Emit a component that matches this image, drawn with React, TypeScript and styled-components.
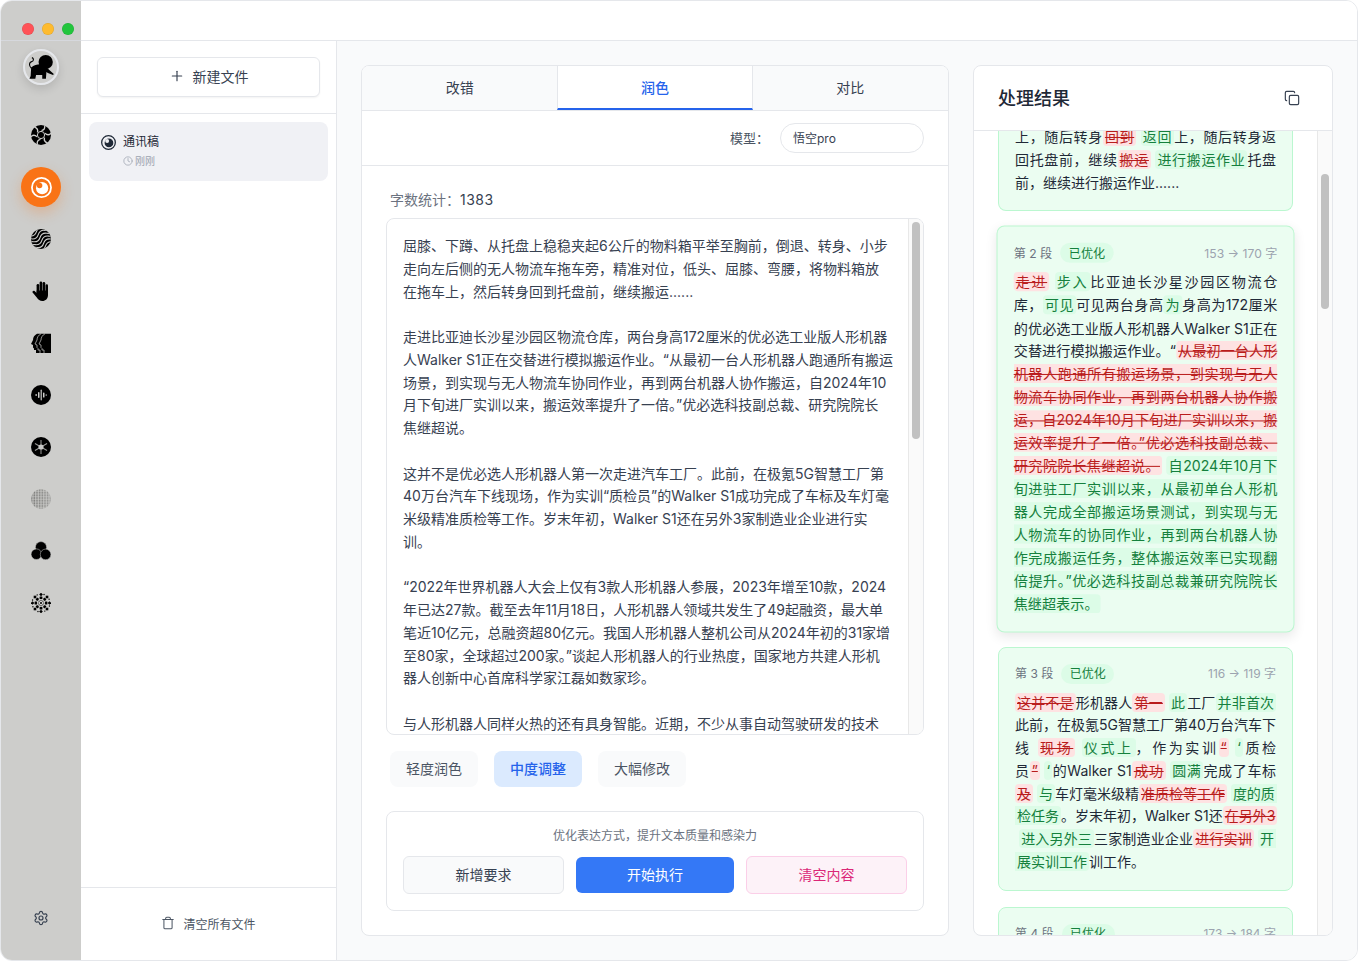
import React from "react";
import styled, { createGlobalStyle } from "styled-components";
import { Plus, Copy, Trash, Settings, Clock } from "lucide-react";

const GlobalStyle = createGlobalStyle`
  * {
    box-sizing: border-box;
  }
  html, body {
    margin: 0;
    padding: 0;
    background: #ffffff;
  }
  body {
    font-family: Inter, "Noto Sans CJK SC", sans-serif;
    font-size: 14px;
    color: #1f2937;
  }
`;

const Window = styled.div`
  width: 1358px;
  height: 961px;
  display: flex;
  border: 1px solid #e5e7eb;
  border-radius: 12px;
  overflow: hidden;
  background: #ffffff;
`;

const Rail = styled.aside`
  width: 80px;
  flex: none;
  display: flex;
  flex-direction: column;
  align-items: center;
  background: #cdcdcb;
`;

const Lights = styled.div`
  width: 100%;
  height: 40px;
  flex: none;
  display: flex;
  align-items: flex-end;
  gap: 8px;
  padding: 0 0 5px 21px;
  border-bottom: 1px solid rgba(222, 226, 236, 0.55);
`;

const Light = styled.span<{ $color: string }>`
  width: 12px;
  height: 12px;
  border-radius: 50%;
  background: ${(p) => p.$color};
  box-shadow: inset 0 0 0 0.5px rgba(0, 0, 0, 0.12);
`;

const Logo = styled.div`
  width: 36px;
  height: 36px;
  margin-top: 8px;
  flex: none;
  display: flex;
  align-items: center;
  justify-content: center;
  border: 2px solid #e5e7eb;
  border-radius: 50%;
  box-shadow: 0 4px 10px rgba(0, 0, 0, 0.12);
`;

const RailNav = styled.nav`
  margin-top: 30px;
  display: flex;
  flex-direction: column;
  gap: 12px;
`;

const RailItem = styled.div<{ $active?: boolean }>`
  width: 40px;
  height: 40px;
  display: flex;
  align-items: center;
  justify-content: center;
  border-radius: 50%;
  background: ${(p) => (p.$active ? "#f97316" : "transparent")};
  box-shadow: ${(p) => (p.$active ? "0 6px 14px rgba(249, 115, 22, 0.28)" : "none")};
`;

const RailFooter = styled.div`
  margin-top: auto;
  padding-bottom: 34px;
  color: #374151;
  display: flex;
`;

const Column = styled.div`
  flex: 1;
  min-width: 0;
  display: flex;
  flex-direction: column;
`;

const TopBar = styled.header`
  height: 40px;
  flex: none;
  background: #ffffff;
  border-bottom: 1px solid #e5e7eb;
`;

const Body = styled.div`
  flex: 1;
  min-height: 0;
  display: flex;
`;

const Sidebar = styled.aside`
  width: 256px;
  flex: none;
  display: flex;
  flex-direction: column;
  background: #ffffff;
  border-right: 1px solid #e5e7eb;
`;

const SidebarTop = styled.div`
  padding: 16px;
  border-bottom: 1px solid #e5e7eb;
`;

const NewFileButton = styled.button`
  width: 100%;
  height: 40px;
  display: flex;
  align-items: center;
  justify-content: center;
  gap: 8px;
  padding: 0 0 2px;
  font: inherit;
  font-size: 14px;
  color: #374151;
  background: #ffffff;
  border: 1px solid #e5e7eb;
  border-radius: 6px;
  box-shadow: 0 1px 2px rgba(0, 0, 0, 0.05);
`;

const FileList = styled.div`
  flex: 1;
  padding: 8px;
`;

const FileItem = styled.div`
  height: 59px;
  display: flex;
  gap: 7px;
  padding: 11px 12px;
  background: #f0f1f5;
  border-radius: 8px;
`;

const FileIcon = styled.div`
  margin-top: 2px;
  flex: none;
  display: flex;
`;

const FileInfo = styled.div`
  display: flex;
  flex-direction: column;
  gap: 3px;
`;

const FileName = styled.div`
  font-size: 12px;
  line-height: 18px;
  color: #1f2937;
`;

const FileMeta = styled.div`
  display: flex;
  align-items: center;
  gap: 2px;
  font-size: 10px;
  line-height: 14px;
  color: #9ca3af;
`;

const SidebarFooter = styled.div`
  height: 73px;
  flex: none;
  display: flex;
  align-items: center;
  justify-content: center;
  gap: 8px;
  padding-bottom: 2px;
  font-size: 12px;
  color: #4b5563;
  border-top: 1px solid #e5e7eb;
`;

const Main = styled.main`
  flex: 1;
  min-width: 0;
  display: flex;
  gap: 24px;
  padding: 24px;
  background: #f9fafb;
`;

const EditorCard = styled.section`
  flex: 1;
  min-width: 0;
  display: flex;
  flex-direction: column;
  background: #ffffff;
  border: 1px solid #e5e7eb;
  border-radius: 8px;
  overflow: hidden;
`;

const Tabs = styled.div`
  height: 45px;
  flex: none;
  display: flex;
  background: #f9fafb;
  border-bottom: 1px solid #e5e7eb;
`;

const Tab = styled.div<{ $active?: boolean }>`
  flex: 1;
  height: 44px;
  display: flex;
  align-items: center;
  justify-content: center;
  font-size: 14px;
  font-weight: ${(p) => (p.$active ? 500 : 400)};
  color: ${(p) => (p.$active ? "#2563eb" : "#374151")};
  background: ${(p) => (p.$active ? "#ffffff" : "transparent")};
  border-bottom: 2px solid ${(p) => (p.$active ? "#2563eb" : "transparent")};
  border-left: 1px solid ${(p) => (p.$active ? "#e5e7eb" : "transparent")};
  border-right: 1px solid ${(p) => (p.$active ? "#e5e7eb" : "transparent")};
`;

const ModelRow = styled.div`
  height: 55px;
  flex: none;
  display: flex;
  align-items: center;
  justify-content: flex-end;
  gap: 11px;
  padding: 0 24px;
  border-bottom: 1px solid #e5e7eb;
`;

const ModelLabel = styled.span`
  font-size: 13px;
  color: #4b5563;
  margin-bottom: 2px;
`;

const ModelSelect = styled.div`
  width: 144px;
  height: 30px;
  display: flex;
  align-items: center;
  padding: 0 12px 2px;
  font-size: 12px;
  color: #374151;
  border: 1px solid #e5e7eb;
  border-radius: 15px;
`;

const EditorBody = styled.div`
  flex: 1;
  min-height: 0;
  display: flex;
  flex-direction: column;
  padding: 24px;
`;

const WordCount = styled.div`
  flex: none;
  padding-left: 4px;
  margin-bottom: 8px;
  font-size: 14px;
  line-height: 20px;
  color: #6b7280;
`;

const WordNumber = styled.span`
  color: #374151;
  letter-spacing: 0.5px;
`;

const TextBox = styled.div`
  flex: 1;
  min-height: 0;
  display: flex;
  border: 1px solid #e5e7eb;
  border-radius: 8px;
  overflow: hidden;
`;

const SourceText = styled.div`
  flex: 1;
  min-width: 0;
  padding: 16px;
  font-size: 14px;
  line-height: 22.75px;
  color: #374151;
  white-space: pre;
  overflow: hidden;
`;

const Track = styled.div`
  width: 15px;
  flex: none;
  padding-left: 3px;
  background: #fafafa;
  border-left: 1px solid #e8e8e8;
`;

const Thumb = styled.div<{ $top: number; $height: number }>`
  width: 8px;
  height: ${(p) => p.$height}px;
  margin-top: ${(p) => p.$top}px;
  background: #c1c1c1;
  border-radius: 4px;
`;

const Chips = styled.div`
  flex: none;
  display: flex;
  gap: 16px;
  padding-left: 4px;
  margin: 16px 0 24px;
`;

const Chip = styled.div<{ $active?: boolean }>`
  width: 88px;
  height: 36px;
  display: flex;
  align-items: center;
  justify-content: center;
  padding-bottom: 2px;
  font-size: 14px;
  font-weight: ${(p) => (p.$active ? 500 : 400)};
  color: ${(p) => (p.$active ? "#2563eb" : "#4b5563")};
  background: ${(p) => (p.$active ? "#dbeafe" : "#f9fafb")};
  border-radius: 8px;
`;

const ActionBox = styled.div`
  height: 100px;
  flex: none;
  padding: 16px;
  border: 1px solid #e5e7eb;
  border-radius: 8px;
`;

const ActionHint = styled.div`
  font-size: 12px;
  line-height: 16px;
  text-align: center;
  color: #6b7280;
  margin-bottom: 12px;
`;

const ActionRow = styled.div`
  display: grid;
  grid-template-columns: 161px 158px 161px;
  gap: 12px;
  align-items: center;
`;

const tones = {
  plain: { bg: "#f9fafb", fg: "#374151", border: "1px solid #e5e7eb", height: 38 },
  primary: { bg: "#3478f6", fg: "#ffffff", border: "none", height: 36 },
  danger: { bg: "#fdf2f8", fg: "#db2777", border: "1px solid #fbcfe8", height: 38 },
};

const ActionButton = styled.button<{ $tone: keyof typeof tones }>`
  height: ${(p) => tones[p.$tone].height}px;
  padding: 0 0 2px;
  font: inherit;
  font-size: 14px;
  color: ${(p) => tones[p.$tone].fg};
  background: ${(p) => tones[p.$tone].bg};
  border: ${(p) => tones[p.$tone].border};
  border-radius: 6px;
`;

const ResultPanel = styled.section`
  width: 360px;
  flex: none;
  display: flex;
  flex-direction: column;
  background: #ffffff;
  border: 1px solid #e5e7eb;
  border-radius: 8px;
  overflow: hidden;
`;

const ResultHeader = styled.div`
  height: 65px;
  flex: none;
  display: flex;
  align-items: center;
  justify-content: space-between;
  padding: 0 32px 0 24px;
  border-bottom: 1px solid #e5e7eb;
`;

const ResultTitle = styled.h2`
  margin: 0 0 2px;
  font-size: 18px;
  font-weight: 500;
  color: #1f2937;
`;

const CopyButton = styled.div`
  display: flex;
  color: #374151;
`;

const ResultBody = styled.div`
  flex: 1;
  min-height: 0;
  display: flex;
`;

const ResultList = styled.div`
  flex: 1;
  min-width: 0;
  display: flex;
  flex-direction: column;
  gap: 16px;
  padding: 0 24px;
  overflow: hidden;
`;

const ResultCard = styled.article<{ $cut?: boolean; $raised?: boolean }>`
  flex: none;
  padding: ${(p) => (p.$cut ? "0 16px 16px" : "16px")};
  background: #ebfdf1;
  border: 1px solid #bbf7d0;
  border-top-width: ${(p) => (p.$cut ? 0 : 1)}px;
  border-radius: ${(p) => (p.$cut ? "0 0 8px 8px" : "8px")};
  transform: ${(p) => (p.$raised ? "translateY(0.5px) scale(1.01)" : "none")};
  box-shadow: ${(p) => (p.$raised ? "0 4px 12px rgba(0, 0, 0, 0.09)" : "none")};
`;

const CardHead = styled.div`
  display: flex;
  align-items: center;
  height: 20px;
  margin-bottom: 8px;
  font-size: 12px;
`;

const SegmentNo = styled.span`
  color: #6b7280;
  margin: 0 8px 2px 0;
`;

const Badge = styled.span`
  height: 20px;
  padding: 0 8.5px 2px;
  display: flex;
  align-items: center;
  color: #15803d;
  background: #dcfce7;
  border-radius: 10px;
`;

const CharCount = styled.span`
  margin: 0 0 2px auto;
  color: #9ca3af;
`;

const Diff = styled.p<{ $shift?: number }>`
  margin: ${(p) => p.$shift ?? 0}px 0 0;
  font-size: 14px;
  line-height: 22.75px;
  text-align: justify;
  color: #1f2937;
`;

const DiffLine = styled.span<{ $last?: boolean }>`
  display: block;
  white-space: nowrap;
  text-align-last: ${(p) => (p.$last ? "left" : "justify")};
`;

const radius = { start: "0 4px 4px 0", end: "4px 0 0 4px" };

const Del = styled.del`
  padding: 1px 2px;
  color: #b91c1c;
  background: #fee2e2;
  border-radius: 4px;
`;

const Ins = styled.ins<{ $split?: keyof typeof radius }>`
  padding: 1px 2px;
  color: #15803d;
  background: #dcfce7;
  border-radius: ${(p) => (p.$split ? radius[p.$split] : "4px")};
  text-decoration: none;
`;

const IconBall = () => (
  <svg width="20" height="20" viewBox="0 0 20 20">
    <circle cx="10" cy="10" r="10" fill="#000" />
    {[0, 60, 120, 180, 240, 300].map((a) => (
      <path key={a} d="M10.5 5.6 Q14.6 4.6 13.6 0.4" stroke="#cdcdcb" strokeWidth="1.3" fill="none" transform={`rotate(${a} 10 10)`} />
    ))}
    <circle cx="10" cy="10" r="3.6" fill="none" stroke="#cdcdcb" strokeWidth="1" />
  </svg>
);

const IconEye = ({ color, cut, size = 21 }: { color: string; cut: string; size?: number }) => (
  <svg width={size} height={size} viewBox="0 0 20 20">
    <circle cx="10" cy="10" r="9.1" fill="none" stroke={color} strokeWidth="1.7" />
    <circle cx="10.6" cy="10.6" r="5.8" fill={color} />
    <circle cx="8.2" cy="8" r="2.6" fill={cut} />
  </svg>
);

const IconWaves = () => (
  <svg width="20" height="20" viewBox="0 0 20 20">
    <defs>
      <clipPath id="wavesClip">
        <circle cx="10" cy="10" r="10" />
      </clipPath>
    </defs>
    <g clipPath="url(#wavesClip)">
      <rect width="20" height="20" fill="#000" />
      <g transform="rotate(-32 10 10)">
        {[-2, 1.4, 4.8, 8.2, 11.6, 15, 18.4, 21.8].map((y) => (
          <path key={y} d={`M-6 ${y} q4 -3.4 8 0 t8 0 t8 0 t8 0`} stroke="#cdcdcb" strokeWidth="1.1" fill="none" />
        ))}
      </g>
    </g>
  </svg>
);

const IconHand = () => (
  <svg width="20" height="20" viewBox="0 0 20 20" fill="#000">
    <rect x="5.6" y="3" width="2.6" height="10" rx="1.3" />
    <rect x="8.6" y="0.4" width="2.6" height="11" rx="1.3" />
    <rect x="11.6" y="1" width="2.6" height="11" rx="1.3" />
    <rect x="14.5" y="3.2" width="2.5" height="11" rx="1.25" />
    <path d="M5.6 9.5 H17 V14 C17 17.8 14.6 20 11.4 20 C8.8 20 7.2 18.6 5.8 16.6 L1.6 11.6 C0.8 10.4 2.4 9 3.6 10 L5.6 12 Z" />
  </svg>
);

const profile = (x: number) =>
  `M${x + 6} 0.8 C${x + 3.5} 2 ${x + 2} 4.5 ${x + 2} 7 L${x} 11 L${x + 2} 12 L${x + 2} 14.5 L${x + 3} 15.5 L${x + 3} 17 L${x + 5} 17 L${x + 5} 20`;

const IconHeads = () => (
  <svg width="20" height="20" viewBox="0 0 20 20">
    <path d={`${profile(0)} H20 V0.8 Z`} fill="#000" />
    <path d={profile(4)} fill="none" stroke="#cdcdcb" strokeWidth="0.7" />
    <path d={profile(8)} fill="none" stroke="#cdcdcb" strokeWidth="0.7" />
  </svg>
);

const IconPulse = () => (
  <svg width="20" height="20" viewBox="0 0 20 20">
    <circle cx="10" cy="10" r="10" fill="#000" />
    <g fill="#cdcdcb">
      <rect x="4.4" y="9" width="1.5" height="2" rx="0.7" />
      <rect x="7" y="7" width="1.5" height="6" rx="0.7" />
      <rect x="9.6" y="4.6" width="1.2" height="10.8" rx="0.6" />
      <rect x="12" y="7.4" width="1.5" height="5.2" rx="0.7" />
      <rect x="14.6" y="9.2" width="1.2" height="1.6" rx="0.6" />
    </g>
  </svg>
);

const IconFlake = () => (
  <svg width="20" height="20" viewBox="0 0 20 20">
    <circle cx="10" cy="10" r="10" fill="#000" />
    {[0, 60, 120].map((a) => (
      <rect key={a} x="9.5" y="3" width="1" height="14" fill="#9c9c9a" transform={`rotate(${a} 10 10)`} />
    ))}
    <circle cx="10" cy="10" r="2.6" fill="#c9c9c7" />
  </svg>
);

const IconMesh = () => (
  <svg width="20" height="20" viewBox="0 0 20 20">
    <defs>
      <clipPath id="meshClip">
        <circle cx="10" cy="10" r="9.8" />
      </clipPath>
    </defs>
    <g clipPath="url(#meshClip)">
      {Array.from({ length: 13 }, (_, i) => (
        <line key={i} x1={i * 1.6 + 0.4} y1="0" x2={i * 1.6 + 0.4} y2="20" stroke="#000" strokeWidth="0.75" opacity={0.75 - i * 0.025} />
      ))}
      {Array.from({ length: 13 }, (_, i) => (
        <line key={i} x1="0" y1={i * 1.6 + 1} x2="20" y2={i * 1.6 + 1} stroke="#cdcdcb" strokeWidth="0.65" />
      ))}
    </g>
  </svg>
);

const IconClover = () => (
  <svg width="20" height="20" viewBox="0 0 20 20" fill="#000" stroke="#cdcdcb" strokeWidth="0.5">
    <circle cx="10" cy="6.2" r="5.6" />
    <circle cx="5.4" cy="13.2" r="5.3" />
    <circle cx="14.6" cy="13.4" r="5.3" />
  </svg>
);

const IconMandala = () => (
  <svg width="20" height="20" viewBox="0 0 20 20" fill="#000">
    {[0, 45, 90, 135, 180, 225, 270, 315].map((a) => (
      <g key={a} transform={`rotate(${a} 10 10)`}>
        <rect x="8.7" y="0.2" width="2.6" height="2.6" transform="rotate(45 10 1.5)" />
        <circle cx="6.2" cy="1.9" r="0.7" />
        <rect x="8.6" y="3.6" width="2.8" height="2.4" rx="0.5" />
        <circle cx="10" cy="7.3" r="0.6" />
      </g>
    ))}
    <circle cx="10" cy="10" r="1" />
  </svg>
);

const IconMascot = () => (
  <svg width="32" height="32" viewBox="0 0 26 26" fill="#000" style={{ flex: "none" }}>
    <circle cx="16.8" cy="9" r="5.8" />
    <path d="M5 13.5 C8 10.6 12 10.4 15 11 L20 15.6 L23.4 18.6 L22.8 19.4 L18.6 17.8 L17.4 17 L17 22.6 L14 22.6 L14 19.4 L9 19.4 L8.4 22.6 L3.6 22.6 L4.6 20.4 Z" />
    <path d="M5.2 14 C2.8 11.8 3.4 9 5.4 8.6 C7.2 8.2 7.4 6 5.6 5.4" fill="none" stroke="#000" strokeWidth="0.9" />
  </svg>
);

const railIcons = [
  <IconBall />,
  <IconEye color="#ffffff" cut="#f97316" />,
  <IconWaves />,
  <IconHand />,
  <IconHeads />,
  <IconPulse />,
  <IconFlake />,
  <IconMesh />,
  <IconClover />,
  <IconMandala />,
];

const sourceText = `屈膝、下蹲、从托盘上稳稳夹起6公斤的物料箱平举至胸前，倒退、转身、小步
走向左后侧的无人物流车拖车旁，精准对位，低头、屈膝、弯腰，将物料箱放
在拖车上，然后转身回到托盘前，继续搬运......

走进比亚迪长沙星沙园区物流仓库，两台身高172厘米的优必选工业版人形机器
人Walker S1正在交替进行模拟搬运作业。“从最初一台人形机器人跑通所有搬运
场景，到实现与无人物流车协同作业，再到两台机器人协作搬运，自2024年10
月下旬进厂实训以来，搬运效率提升了一倍。”优必选科技副总裁、研究院院长
焦继超说。

这并不是优必选人形机器人第一次走进汽车工厂。此前，在极氪5G智慧工厂第
40万台汽车下线现场，作为实训“质检员”的Walker S1成功完成了车标及车灯毫
米级精准质检等工作。岁末年初，Walker S1还在另外3家制造业企业进行实
训。

“2022年世界机器人大会上仅有3款人形机器人参展，2023年增至10款，2024
年已达27款。截至去年11月18日，人形机器人领域共发生了49起融资，最大单
笔近10亿元，总融资超80亿元。我国人形机器人整机公司从2024年初的31家增
至80家，全球超过200家。”谈起人形机器人的行业热度，国家地方共建人形机
器人创新中心首席科学家江磊如数家珍。

与人形机器人同样火热的还有具身智能。近期，不少从事自动驾驶研发的技术`;

export default function App() {
  return (
    <>
      <GlobalStyle />
      <Window>
        <Rail>
          <Lights>
            <Light $color="#ff5257" />
            <Light $color="#febb2e" />
            <Light $color="#22c53c" />
          </Lights>
          <Logo>
            <IconMascot />
          </Logo>
          <RailNav>
            {railIcons.map((icon, i) => (
              <RailItem key={i} $active={i === 1}>
                {icon}
              </RailItem>
            ))}
          </RailNav>
          <RailFooter>
            <Settings size={16} strokeWidth={1.75} />
          </RailFooter>
        </Rail>
        <Column>
          <TopBar />
          <Body>
            <Sidebar>
              <SidebarTop>
                <NewFileButton>
                  <Plus size={16} strokeWidth={1.75} />
                  新建文件
                </NewFileButton>
              </SidebarTop>
              <FileList>
                <FileItem>
                  <FileIcon>
                    <IconEye color="#1f2937" cut="#f0f1f5" size={15} />
                  </FileIcon>
                  <FileInfo>
                    <FileName>通讯稿</FileName>
                    <FileMeta>
                      <Clock size={10} strokeWidth={1.75} />
                      刚刚
                    </FileMeta>
                  </FileInfo>
                </FileItem>
              </FileList>
              <SidebarFooter>
                <Trash size={14} strokeWidth={1.75} />
                清空所有文件
              </SidebarFooter>
            </Sidebar>
            <Main>
              <EditorCard>
                <Tabs>
                  <Tab>改错</Tab>
                  <Tab $active>润色</Tab>
                  <Tab>对比</Tab>
                </Tabs>
                <ModelRow>
                  <ModelLabel>模型：</ModelLabel>
                  <ModelSelect>悟空pro</ModelSelect>
                </ModelRow>
                <EditorBody>
                  <WordCount>
                    字数统计：<WordNumber>1383</WordNumber>
                  </WordCount>
                  <TextBox>
                    <SourceText>{sourceText}</SourceText>
                    <Track>
                      <Thumb $top={3} $height={217} />
                    </Track>
                  </TextBox>
                  <Chips>
                    <Chip>轻度润色</Chip>
                    <Chip $active>中度调整</Chip>
                    <Chip>大幅修改</Chip>
                  </Chips>
                  <ActionBox>
                    <ActionHint>优化表达方式，提升文本质量和感染力</ActionHint>
                    <ActionRow>
                      <ActionButton $tone="plain">新增要求</ActionButton>
                      <ActionButton $tone="primary">开始执行</ActionButton>
                      <ActionButton $tone="danger">清空内容</ActionButton>
                    </ActionRow>
                  </ActionBox>
                </EditorBody>
              </EditorCard>
              <ResultPanel>
                <ResultHeader>
                  <ResultTitle>处理结果</ResultTitle>
                  <CopyButton>
                    <Copy size={16} strokeWidth={1.75} />
                  </CopyButton>
                </ResultHeader>
                <ResultBody>
                  <ResultList>
                    <ResultCard $cut>
                      <Diff $shift={-5}>
                        上，随后转身<Del>回到</Del> <Ins>返回</Ins>上，随后转身返回托盘前，继续<Del>搬运</Del> <Ins>进行搬运作业</Ins>托盘前，继续进行搬运作业......
                      </Diff>
                    </ResultCard>
                    <ResultCard $raised>
                      <CardHead>
                        <SegmentNo>第 2 段</SegmentNo>
                        <Badge>已优化</Badge>
                        <CharCount>153 → 170 字</CharCount>
                      </CardHead>
                      <Diff>
                        <Del>走进</Del> <Ins>步入</Ins>比亚迪长沙星沙园区物流仓库，<Ins>可见</Ins>可见两台身高<Ins>为</Ins>身高为172厘米的优必选工业版人形机器人Walker S1正在交替进行模拟搬运作业。“<Del>从最初一台人形机器人跑通所有搬运场景，到实现与无人物流车协同作业，再到两台机器人协作搬运，自2024年10月下旬进厂实训以来，搬运效率提升了一倍。”优必选科技副总裁、研究院院长焦继超说。</Del> <Ins>自2024年10月下旬进驻工厂实训以来，从最初单台人形机器人完成全部搬运场景测试，到实现与无人物流车的协同作业，再到两台机器人协作完成搬运任务，整体搬运效率已实现翻倍提升。”优必选科技副总裁兼研究院院长焦继超表示。</Ins>
                      </Diff>
                    </ResultCard>
                    <ResultCard>
                      <CardHead>
                        <SegmentNo>第 3 段</SegmentNo>
                        <Badge>已优化</Badge>
                        <CharCount>116 → 119 字</CharCount>
                      </CardHead>
                      <Diff>
                        <DiffLine>
                          <Del>这并不是</Del>形机器人<Del>第一</Del> <Ins>此</Ins>工厂<Ins>并非首次</Ins>
                        </DiffLine>
                        <DiffLine>此前，在极氪5G智慧工厂第40万台汽车下</DiffLine>
                        <DiffLine>
                          线 <Del>现场</Del> <Ins>仪式上</Ins>，作为实训<Del>“</Del> <Ins>‘</Ins>质检
                        </DiffLine>
                        <DiffLine>
                          员<Del>”</Del> <Ins>‘</Ins>的Walker S1<Del>成功</Del> <Ins>圆满</Ins>完成了车标
                        </DiffLine>
                        <DiffLine>
                          <Del>及</Del> <Ins>与</Ins>车灯毫米级精<Del>准质检等工作</Del> <Ins $split="end">度的质</Ins>
                        </DiffLine>
                        <DiffLine>
                          <Ins $split="start">检任务</Ins>。岁末年初，Walker S1还<Del>在另外3</Del>
                        </DiffLine>
                        <DiffLine>
                          {"\u00a0"}
                          <Ins>进入另外三</Ins>三家制造业企业<Del>进行实训</Del> <Ins $split="end">开</Ins>
                        </DiffLine>
                        <DiffLine $last>
                          <Ins $split="start">展实训工作</Ins>训工作。
                        </DiffLine>
                      </Diff>
                    </ResultCard>
                    <ResultCard>
                      <CardHead>
                        <SegmentNo>第 4 段</SegmentNo>
                        <Badge>已优化</Badge>
                        <CharCount>173 → 184 字</CharCount>
                      </CardHead>
                    </ResultCard>
                  </ResultList>
                  <Track>
                    <Thumb $top={43} $height={135} />
                  </Track>
                </ResultBody>
              </ResultPanel>
            </Main>
          </Body>
        </Column>
      </Window>
    </>
  );
}
